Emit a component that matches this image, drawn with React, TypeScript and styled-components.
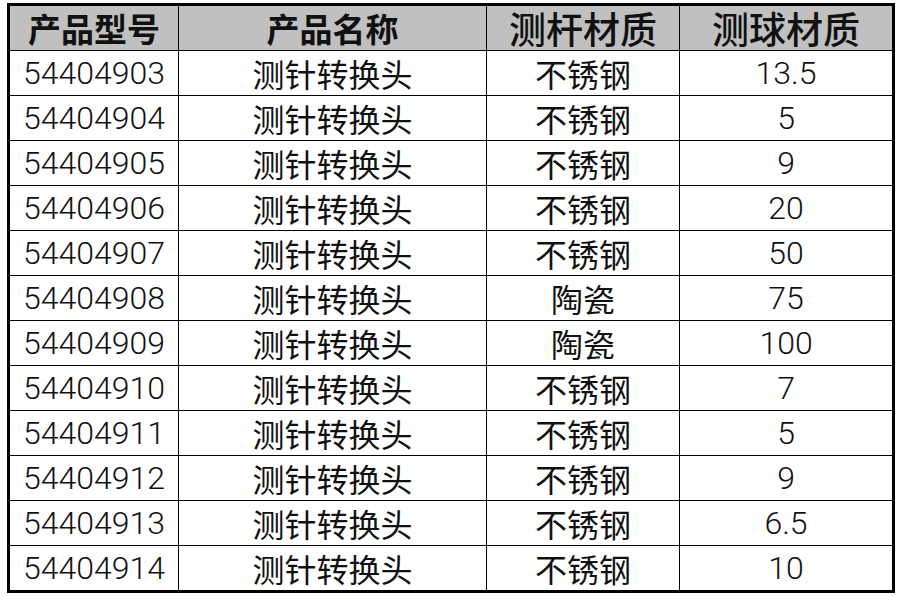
import React from "react";
import styled, { createGlobalStyle } from "styled-components";

const Global = createGlobalStyle`
  html, body { margin: 0; padding: 0; background: #ffffff; }
  body { font-family: "Liberation Sans", "Noto Sans CJK SC", sans-serif; color: #111; }
`;

const Page = styled.div`
  padding: 3px 0 0 7px;
`;

const Table = styled.table`
  border-collapse: collapse;
  table-layout: fixed;
  width: 885px;
  border: 3px solid #000;
`;

const HeadCell = styled.th<{ $big?: boolean }>`
  background: #c0c0c0;
  height: 44px;
  padding: 0;
  border: 1px solid #000;
  font-family: "Noto Sans CJK SC", sans-serif;
  font-weight: ${(p) => (p.$big ? 500 : 700)};
  font-size: ${(p) => (p.$big ? "37px" : "33px")};
  line-height: 1;
  text-align: center;
  vertical-align: middle;
  color: #111;
`;

const Cell = styled.td<{ $num?: boolean }>`
  height: 44px;
  padding: 0;
  border: 1px solid #000;
  font-family: ${(p) =>
    p.$num ? `Roboto, "Liberation Sans", sans-serif` : `"Noto Sans CJK SC", sans-serif`};
  font-weight: ${(p) => (p.$num ? 300 : 400)};
  font-size: 32px;
  line-height: 1;
  text-align: center;
  vertical-align: middle;
  color: #111;
  white-space: nowrap;
`;

const rows: [string, string, string, string][] = [
  ["54404903", "测针转换头", "不锈钢", "13.5"],
  ["54404904", "测针转换头", "不锈钢", "5"],
  ["54404905", "测针转换头", "不锈钢", "9"],
  ["54404906", "测针转换头", "不锈钢", "20"],
  ["54404907", "测针转换头", "不锈钢", "50"],
  ["54404908", "测针转换头", "陶瓷", "75"],
  ["54404909", "测针转换头", "陶瓷", "100"],
  ["54404910", "测针转换头", "不锈钢", "7"],
  ["54404911", "测针转换头", "不锈钢", "5"],
  ["54404912", "测针转换头", "不锈钢", "9"],
  ["54404913", "测针转换头", "不锈钢", "6.5"],
  ["54404914", "测针转换头", "不锈钢", "10"],
];

export default function App() {
  return (
    <>
      <Global />
      <Page>
        <Table>
          <colgroup>
            <col style={{ width: 170 }} />
            <col style={{ width: 308 }} />
            <col style={{ width: 193 }} />
            <col style={{ width: 214 }} />
          </colgroup>
          <thead>
            <tr>
              <HeadCell>产品型号</HeadCell>
              <HeadCell>产品名称</HeadCell>
              <HeadCell $big>测杆材质</HeadCell>
              <HeadCell $big>测球材质</HeadCell>
            </tr>
          </thead>
          <tbody>
            {rows.map((r) => (
              <tr key={r[0]}>
                <Cell $num>{r[0]}</Cell>
                <Cell>{r[1]}</Cell>
                <Cell>{r[2]}</Cell>
                <Cell $num>{r[3]}</Cell>
              </tr>
            ))}
          </tbody>
        </Table>
      </Page>
    </>
  );
}
